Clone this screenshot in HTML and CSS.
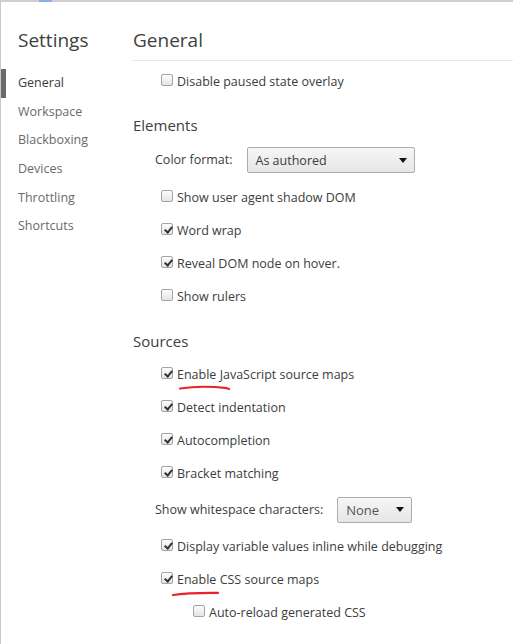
FILE: index.html
```html
<!DOCTYPE html>
<html>
<head>
<meta charset="utf-8">
<link rel="stylesheet" href="styles.css">
</head>
<body>
<div class="window">
  <div class="topline"><span class="tab-mark"></span></div>
  <div class="panes">
    <nav class="sidebar">
      <div class="title">Settings</div>
      <ul class="tabs">
        <li class="tab active">General</li>
        <li class="tab">Workspace</li>
        <li class="tab">Blackboxing</li>
        <li class="tab">Devices</li>
        <li class="tab">Throttling</li>
        <li class="tab">Shortcuts</li>
      </ul>
    </nav>
    <main class="main">
      <div class="header">General</div>
      <div class="content">
        <label class="row"><span class="cb"></span><span>Disable paused state overlay</span></label>

        <div class="section-title">Elements</div>
        <div class="row select-row first-select">
          <span class="field-label">Color format:</span>
          <span class="select wide"><span>As authored</span><span class="arrow"></span></span>
        </div>
        <label class="row"><span class="cb"></span><span>Show user agent shadow DOM</span></label>
        <label class="row"><span class="cb checked"></span><span>Word wrap</span></label>
        <label class="row"><span class="cb checked"></span><span>Reveal DOM node on hover.</span></label>
        <label class="row"><span class="cb"></span><span>Show rulers</span></label>

        <div class="section-title second">Sources</div>
        <label class="row"><span class="cb checked"></span><span class="marked">Enable JavaScript source maps<svg class="scribble s1" width="52" height="8" viewBox="0 0 52 8"><path d="M1 4.5 C 14 2.5, 30 2, 48 4.2 L 50 5" /></svg></span></label>
        <label class="row"><span class="cb checked"></span><span>Detect indentation</span></label>
        <label class="row"><span class="cb checked"></span><span>Autocompletion</span></label>
        <label class="row"><span class="cb checked"></span><span>Bracket matching</span></label>
        <div class="row select-row ws-row">
          <span class="field-label">Show whitespace characters:</span>
          <span class="select narrow"><span class="muted">None</span><span class="arrow"></span></span>
        </div>
        <label class="row"><span class="cb checked"></span><span>Display variable values inline while debugging</span></label>
        <label class="row"><span class="cb checked"></span><span class="marked">Enable CSS source maps<svg class="scribble s2" width="50" height="8" viewBox="0 0 50 8"><path d="M1 6 C 10 4.5, 22 3.6, 46 3.8" /></svg></span></label>
        <label class="row sub"><span class="cb"></span><span>Auto-reload generated CSS</span></label>
      </div>
    </main>
  </div>
</div>
</body>
</html>
```

FILE: styles.css
```css
* { box-sizing: border-box; }
html, body { margin: 0; padding: 0; background: #fff; }
body {
  font-family: "Open Sans", "Noto Sans", sans-serif;
  font-size: 12.5px;
  color: #3c3c3c;
}
.window {
  height: 644px;
  border-left: 1px solid #c9c9c9;
}
.topline {
  height: 2px;
  background: #cfcfcf;
  position: relative;
}
.tab-mark {
  position: absolute;
  left: 38px;
  top: 0;
  width: 13px;
  height: 2px;
  background: #8eaee0;
}
.panes { display: flex; }
.sidebar { width: 132px; flex: none; }
.title {
  font-size: 19px;
  line-height: 24px;
  padding: 26px 0 0 17px;
  color: #404040;
  font-weight: 400;
}
.tabs {
  list-style: none;
  margin: 17px 0 0 0;
  padding: 0;
}
.tab {
  height: 28.7px;
  line-height: 28.7px;
  border-left: 5px solid transparent;
  padding-left: 12px;
  color: #6a6a6a;
  font-size: 12.5px;
}
.tab.active {
  border-left-color: #6a6a6a;
  color: #3c3c3c;
}
.main { flex: 1; }
.header {
  font-size: 19px;
  line-height: 24px;
  padding: 26px 0 8px 0;
  height: 59px;
  border-bottom: 1px solid #e8e8e8;
  color: #404040;
}
.content { padding-top: 3.5px; }
.row {
  display: flex;
  align-items: center;
  height: 33px;
  padding-left: 28px;
}
.row.sub { padding-left: 60px; }
.cb {
  width: 12px;
  height: 12px;
  border: 1px solid #a3a3a3;
  border-radius: 2px;
  background: linear-gradient(#fdfdfd, #e4e4e4);
  margin-right: 4px;
  flex: none;
  position: relative;
  top: -1px;
}
.cb.checked::after {
  content: "";
  position: absolute;
  left: 3.5px;
  top: 0.5px;
  width: 3px;
  height: 6px;
  border-right: 2px solid #333;
  border-bottom: 2px solid #333;
  transform: rotate(40deg);
}
.section-title {
  font-size: 15px;
  line-height: 20px;
  padding: 17px 0 9px 0;
  color: #404040;
}
.section-title.second { padding: 18px 0 7px 0; }
.select-row { padding-left: 22px; }
.first-select { height: 37px; align-items: flex-start; padding-top: 3.5px; }
.ws-row { height: 40px; }
.select {
  margin-left: 14px;
  height: 26px;
  border: 1px solid #acacac;
  border-radius: 2px;
  background: linear-gradient(#f6f6f6, #e6e6e6);
  display: flex;
  align-items: center;
  justify-content: space-between;
  padding: 0 7px 0 8px;
}
.select.wide { width: 168px; }
.select.narrow { width: 75px; }
.first-select .field-label { line-height: 26px; }
.muted { color: #555; font-size: 13px; }
.arrow {
  width: 0; height: 0;
  border-left: 4px solid transparent;
  border-right: 4px solid transparent;
  border-top: 5px solid #111;
}
.marked { position: relative; }
.scribble {
  position: absolute;
  overflow: visible;
}
.scribble path {
  fill: none;
  stroke: #e8232a;
  stroke-width: 2.2;
  stroke-linecap: round;
}
.s1 { left: 2px; top: 18px; }
.s2 { left: -5px; top: 18px; }
```
